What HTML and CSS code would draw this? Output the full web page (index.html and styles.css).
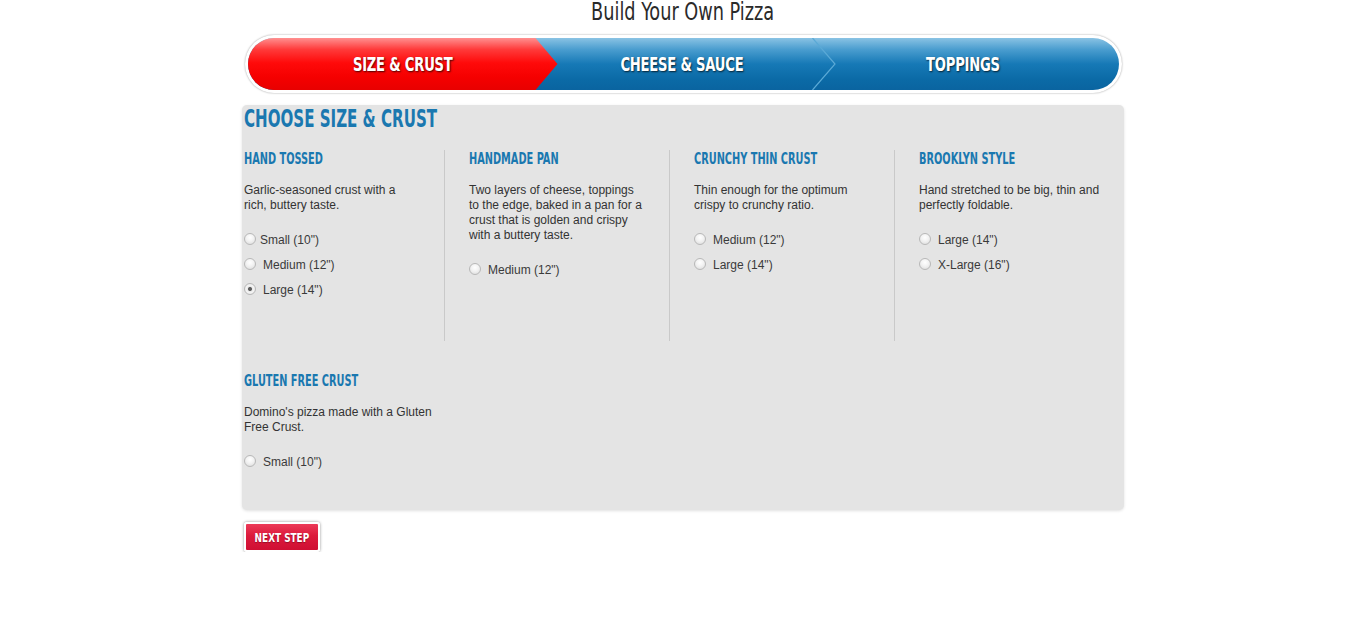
FILE: index.html
```html
<!DOCTYPE html>
<html lang="en">
<head>
<meta charset="utf-8">
<title>Build Your Own Pizza</title>
<link rel="stylesheet" href="styles.css">
</head>
<body>
<div class="page">
  <h1 class="title"><span class="cond">Build Your Own Pizza</span></h1>

  <div class="steps">
    <div class="steps-inner">
      <div class="step step--active"><span class="cond">SIZE &amp; CRUST</span></div>
      <div class="step step--mid"><span class="cond">CHEESE &amp; SAUCE</span>
        <svg class="chev" width="24" height="52" viewBox="0 0 24 52"><polyline points="0.5,0 23,26 0.5,52" fill="none" stroke="#5aa9d6" stroke-width="1.2"/></svg>
      </div>
      <div class="step step--last"><span class="cond">TOPPINGS</span></div>
    </div>
  </div>

  <section class="panel">
    <h2 class="panel-title"><span class="cond">CHOOSE SIZE &amp; CRUST</span></h2>

    <div class="crust-row crust-row--main">
      <div class="crust">
        <h3 class="crust-name"><span class="cond">HAND TOSSED</span></h3>
        <p class="crust-desc">Garlic-seasoned crust with a<br>rich, buttery taste.</p>
        <label class="opt opt--tight"><input type="radio" name="size" class="radio">Small (10")</label>
        <label class="opt"><input type="radio" name="size" class="radio">Medium (12")</label>
        <label class="opt"><input type="radio" name="size" class="radio" checked>Large (14")</label>
      </div>
      <div class="crust">
        <h3 class="crust-name"><span class="cond">HANDMADE PAN</span></h3>
        <p class="crust-desc">Two layers of cheese, toppings<br>to the edge, baked in a pan for a<br>crust that is golden and crispy<br>with a buttery taste.</p>
        <label class="opt"><input type="radio" name="size" class="radio">Medium (12")</label>
      </div>
      <div class="crust">
        <h3 class="crust-name"><span class="cond">CRUNCHY THIN CRUST</span></h3>
        <p class="crust-desc">Thin enough for the optimum<br>crispy to crunchy ratio.</p>
        <label class="opt"><input type="radio" name="size" class="radio">Medium (12")</label>
        <label class="opt"><input type="radio" name="size" class="radio">Large (14")</label>
      </div>
      <div class="crust">
        <h3 class="crust-name"><span class="cond">BROOKLYN STYLE</span></h3>
        <p class="crust-desc">Hand stretched to be big, thin and<br>perfectly foldable.</p>
        <label class="opt"><input type="radio" name="size" class="radio">Large (14")</label>
        <label class="opt"><input type="radio" name="size" class="radio">X-Large (16")</label>
      </div>
    </div>

    <div class="crust-row">
      <div class="crust">
        <h3 class="crust-name"><span class="cond">GLUTEN FREE CRUST</span></h3>
        <p class="crust-desc">Domino's pizza made with a Gluten<br>Free Crust.</p>
        <label class="opt"><input type="radio" name="size" class="radio">Small (10")</label>
      </div>
    </div>
  </section>

  <button class="next-btn" type="button"><span class="cond">NEXT STEP</span></button>
</div>
</body>
</html>
```

FILE: styles.css
```css
html, body {
  margin: 0;
  padding: 0;
  background: #fff;
}

body {
  font-family: "Liberation Sans", Arial, sans-serif;
  color: #333;
}

.page {
  width: 882px;
  margin: 0 auto;
}

.cond {
  display: inline-block;
  white-space: nowrap;
}

.title {
  margin: 0;
  font-family: "DejaVu Sans Condensed", sans-serif;
  font-weight: normal;
  font-size: 24px;
  line-height: 24px;
  color: #2a2a2a;
  text-align: center;
}

.title .cond {
  transform: scaleX(0.82);
}

/* step bar */
.steps {
  width: 871px;
  margin: 11px auto 0;
  padding: 3px;
  background: #fff;
  border-radius: 29px;
  box-shadow: 0 0 2px rgba(0, 0, 0, 0.4);
}

.steps-inner {
  display: flex;
  height: 52px;
  border-radius: 26px;
  overflow: hidden;
  background: linear-gradient(to bottom, #8ac3e4 0%, #4a9dcf 22%, #1679b6 50%, #0b6aa6 80%, #0a64a0 100%);
}

.step {
  position: relative;
  display: flex;
  align-items: center;
  justify-content: center;
  font-family: "DejaVu Sans Condensed", sans-serif;
  font-weight: bold;
  font-size: 19px;
  letter-spacing: -0.3px;
  color: #fff;
  text-shadow: 1px 1px 2px rgba(0, 0, 0, 0.7);
}

.step .cond {
  transform: scaleX(0.77);
}

.step--active {
  width: 310px;
  flex: none;
  background: linear-gradient(to bottom, #ff9090 0%, #ff3a3a 22%, #ff0a0a 48%, #f50000 75%, #e80000 100%);
  clip-path: polygon(0 0, calc(100% - 22px) 0, 100% 50%, calc(100% - 22px) 100%, 0 100%);
}

.step--mid {
  width: 300px;
  flex: none;
  margin-left: -22px;
  padding-right: 8px;
  box-sizing: border-box;
}

.step--last {
  flex: 1;
  margin-left: -22px;
  padding-right: 6px;
}

.chev {
  position: absolute;
  right: 0;
  top: 0;
}

/* panel */
.panel {
  margin-top: 12px;
  padding: 0 2px 35px;
  background: #e4e4e4;
  border-radius: 5px;
  box-shadow: 0 1px 3px rgba(0, 0, 0, 0.12);
}

.panel-title {
  margin: 0;
  font-family: "DejaVu Sans Condensed", sans-serif;
  font-weight: bold;
  font-size: 25px;
  line-height: 28px;
  color: #1a78b0;
}

.panel-title .cond {
  transform: scaleX(0.67);
  transform-origin: left center;
}

.crust-row {
  display: grid;
  grid-template-columns: repeat(4, 201px);
  column-gap: 24px;
  margin-top: 17px;
}

.crust-row + .crust-row {
  margin-top: 31px;
}

.crust-row--main .crust {
  min-height: 191px;
  border-right: 1px solid #c9c9c9;
}

.crust-row--main .crust:last-child {
  border-right: none;
}

.crust-name {
  margin: 0;
  font-family: "DejaVu Sans Condensed", sans-serif;
  font-weight: bold;
  font-size: 16px;
  line-height: 18px;
  color: #1a78b0;
}

.crust-name .cond {
  transform: scaleX(0.68);
  transform-origin: left center;
}

.crust-desc {
  margin: 15px 0 15px;
  font-size: 12px;
  line-height: 15px;
  color: #333;
  white-space: nowrap;
}

.opt {
  display: block;
  font-size: 12px;
  line-height: 25px;
  color: #3a3a3a;
}

.radio {
  -webkit-appearance: none;
  appearance: none;
  width: 12px;
  height: 12px;
  margin: 0 7px 0 0;
  border: 1px solid #b8b8b8;
  border-radius: 50%;
  background: radial-gradient(circle at 50% 35%, #fff 0%, #f2f2f2 45%, #d9d9d9 100%);
  vertical-align: -1px;
  box-sizing: border-box;
}

.opt--tight .radio {
  margin-right: 4px;
}

.radio:checked {
  background: radial-gradient(circle, #555 0%, #666 25%, #e8e8e8 33%, #f4f4f4 55%, #d9d9d9 100%);
}

/* next step */
.next-btn {
  display: block;
  margin: 12px 0 0 2px;
  padding: 0;
  width: 76px;
  height: 30px;
  border: 2px solid #fff;
  border-radius: 3px;
  box-shadow: 0 0 3px rgba(0, 0, 0, 0.45);
  background: linear-gradient(to bottom, #ec3a58 0%, #dc1a3c 45%, #cf0f33 100%);
  font-family: "DejaVu Sans Condensed", sans-serif;
  font-weight: bold;
  font-size: 13px;
  color: #fff;
  text-shadow: 0 1px 1px rgba(0, 0, 0, 0.3);
  cursor: pointer;
}

.next-btn .cond {
  transform: scaleX(0.76);
}
```
